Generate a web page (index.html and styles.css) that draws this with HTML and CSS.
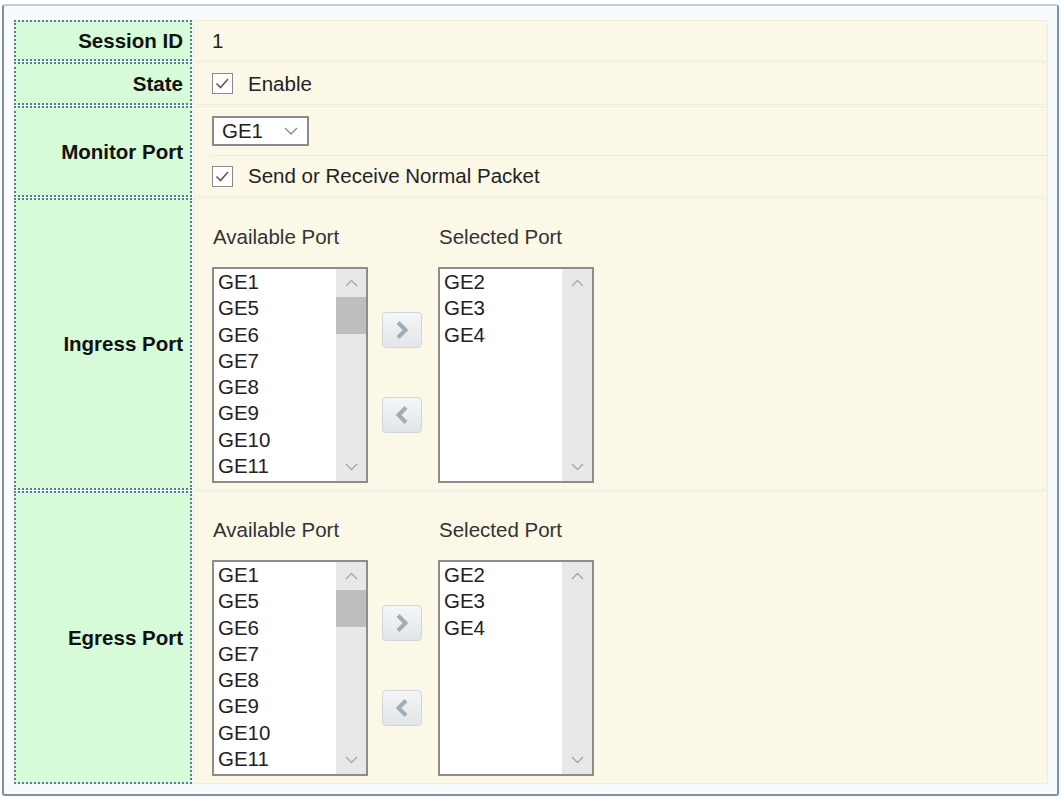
FILE: index.html
```html
<!DOCTYPE html>
<html lang="en">
<head>
  <meta charset="UTF-8">
  <title>Port Mirroring - Session</title>
  <link rel="stylesheet" href="styles.css">
</head>
<body>

  <div class="window">
    <div class="form">

      <div class="row row-session">
        <div class="label">Session ID</div>
        <div class="field">1</div>
      </div>

      <div class="row row-state">
        <div class="label">State</div>
        <div class="field">
          <label class="check-line">
            <span class="check"><svg width="19" height="19" viewBox="0 0 19 19"><polyline points="3.5,9.5 7.5,13.5 15,5" /></svg></span>
            Enable
          </label>
        </div>
      </div>

      <div class="row row-monitor">
        <div class="label">Monitor Port</div>
        <div class="field field-split">
          <div class="sub sub-select">
            <div class="select">
              <span>GE1</span>
              <svg width="14" height="8" viewBox="0 0 14 8"><polyline points="1,1 7,7 13,1" /></svg>
            </div>
          </div>
          <div class="sub sub-check">
            <label class="check-line">
              <span class="check"><svg width="19" height="19" viewBox="0 0 19 19"><polyline points="3.5,9.5 7.5,13.5 15,5" /></svg></span>
              Send or Receive Normal Packet
            </label>
          </div>
        </div>
      </div>

      <div class="row row-ports">
        <div class="label">Ingress Port</div>
        <div class="field field-ports">
          <div class="port-picker">
            <div class="port-title">Available Port</div>
            <div></div>
            <div class="port-title">Selected Port</div>

            <div class="list">
              <div class="list-items">
                <div>GE1</div><div>GE5</div><div>GE6</div><div>GE7</div>
                <div>GE8</div><div>GE9</div><div>GE10</div><div>GE11</div>
              </div>
              <div class="scrollbar">
                <div class="sb-btn"><svg width="13" height="8" viewBox="0 0 13 8"><polyline points="1,7 6.5,1.5 12,7" /></svg></div>
                <div class="sb-thumb"></div>
                <div class="sb-track"></div>
                <div class="sb-btn"><svg width="13" height="8" viewBox="0 0 13 8"><polyline points="1,1 6.5,6.5 12,1" /></svg></div>
              </div>
            </div>

            <div class="move-btns">
              <button class="move"><svg width="16" height="20" viewBox="0 0 16 20"><polyline points="4,2.5 11.5,10 4,17.5" /></svg></button>
              <button class="move"><svg width="16" height="20" viewBox="0 0 16 20"><polyline points="12,2.5 4.5,10 12,17.5" /></svg></button>
            </div>

            <div class="list">
              <div class="list-items">
                <div>GE2</div><div>GE3</div><div>GE4</div>
              </div>
              <div class="scrollbar">
                <div class="sb-btn"><svg width="13" height="8" viewBox="0 0 13 8"><polyline points="1,7 6.5,1.5 12,7" /></svg></div>
                <div class="sb-track"></div>
                <div class="sb-btn"><svg width="13" height="8" viewBox="0 0 13 8"><polyline points="1,1 6.5,6.5 12,1" /></svg></div>
              </div>
            </div>
          </div>
        </div>
      </div>

      <div class="row row-ports row-last">
        <div class="label">Egress Port</div>
        <div class="field field-ports">
          <div class="port-picker">
            <div class="port-title">Available Port</div>
            <div></div>
            <div class="port-title">Selected Port</div>

            <div class="list">
              <div class="list-items">
                <div>GE1</div><div>GE5</div><div>GE6</div><div>GE7</div>
                <div>GE8</div><div>GE9</div><div>GE10</div><div>GE11</div>
              </div>
              <div class="scrollbar">
                <div class="sb-btn"><svg width="13" height="8" viewBox="0 0 13 8"><polyline points="1,7 6.5,1.5 12,7" /></svg></div>
                <div class="sb-thumb"></div>
                <div class="sb-track"></div>
                <div class="sb-btn"><svg width="13" height="8" viewBox="0 0 13 8"><polyline points="1,1 6.5,6.5 12,1" /></svg></div>
              </div>
            </div>

            <div class="move-btns">
              <button class="move"><svg width="16" height="20" viewBox="0 0 16 20"><polyline points="4,2.5 11.5,10 4,17.5" /></svg></button>
              <button class="move"><svg width="16" height="20" viewBox="0 0 16 20"><polyline points="12,2.5 4.5,10 12,17.5" /></svg></button>
            </div>

            <div class="list">
              <div class="list-items">
                <div>GE2</div><div>GE3</div><div>GE4</div>
              </div>
              <div class="scrollbar">
                <div class="sb-btn"><svg width="13" height="8" viewBox="0 0 13 8"><polyline points="1,7 6.5,1.5 12,7" /></svg></div>
                <div class="sb-track"></div>
                <div class="sb-btn"><svg width="13" height="8" viewBox="0 0 13 8"><polyline points="1,1 6.5,6.5 12,1" /></svg></div>
              </div>
            </div>
          </div>
        </div>
      </div>

    </div>
  </div>

</body>
</html>
```

FILE: styles.css
```css
* {
  box-sizing: border-box;
}

body {
  margin: 0;
  background-color: #fff;
  font-family: "Liberation Sans", Arial, sans-serif;
  font-size: 20.5px;
  color: #222;
}

.window {
  width: 1057px;
  height: 792px;
  margin: 4px 0 0 2px;
  padding: 14px 9px 9px 10px;
  border: 2px solid #7891ad;
  border-top-color: #b9cfe3;
  border-radius: 3px;
  background-color: #f8fafb;
}

.form {
  display: flex;
  flex-direction: column;
  gap: 1px;
}

.row {
  display: grid;
  grid-template-columns: 178px 1fr;
  column-gap: 1px;
}

.row-session { height: 41px; }
.row-state { height: 43px; }
.row-monitor { height: 91px; }
.row-ports { height: 292px; }
.row-last { height: 293px; }

.label {
  display: flex;
  align-items: center;
  justify-content: flex-end;
  padding-right: 7px;
  background-color: #d7fad8;
  border: 2px dotted #5a7c9c;
  font-weight: bold;
  color: #111;
}

.field {
  display: flex;
  align-items: center;
  padding-left: 18px;
  background-color: #fcf8e8;
  border: 1px dotted #e4e0cf;
}

/* checkbox + text */
.check-line {
  display: flex;
  align-items: center;
  gap: 15px;
}

.check {
  display: inline-block;
  width: 21px;
  height: 21px;
  border: 1px solid #8b8b8b;
  background-color: #fff;
}

.check svg {
  display: block;
}

.check polyline {
  fill: none;
  stroke: #5a5a5a;
  stroke-width: 1.6;
}

/* monitor port has two lines */
.field-split {
  flex-direction: column;
  align-items: stretch;
}

.sub {
  display: flex;
  align-items: center;
}

.sub-select {
  height: 49px;
  border-bottom: 1px dotted #dedac8;
}

.sub-check {
  flex: 1;
}

.select {
  display: flex;
  align-items: center;
  justify-content: space-between;
  width: 97px;
  height: 30px;
  padding: 0 9px 0 8px;
  border: 2px solid #8a8a8a;
  background-color: #fff;
}

.select polyline {
  fill: none;
  stroke: #8c8c8c;
  stroke-width: 1.3;
}

/* available / selected port pickers */
.field-ports {
  align-items: flex-start;
  padding-top: 26px;
}

.port-picker {
  display: grid;
  grid-template-columns: 156px 70px 156px;
  grid-template-rows: 24px 216px;
  row-gap: 18px;
}

.port-title {
  line-height: 24px;
  padding-left: 1px;
  color: #333;
}

.list {
  display: flex;
  border: 2px solid #8d8d8b;
  background-color: #fff;
  overflow: hidden;
}

.list-items {
  flex: 1;
  padding-left: 4px;
  line-height: 26.3px;
}

.scrollbar {
  display: flex;
  flex-direction: column;
  width: 30px;
  background-color: #e8e8e8;
}

.sb-btn {
  display: flex;
  align-items: center;
  justify-content: center;
  height: 28px;
}

.sb-btn polyline {
  fill: none;
  stroke: #a6a6a6;
  stroke-width: 1.3;
}

.sb-thumb {
  height: 37px;
  background-color: #bebebe;
}

.sb-track {
  flex: 1;
}

.move-btns {
  display: flex;
  flex-direction: column;
  gap: 49px;
  padding: 45px 0 0 14px;
}

.move {
  display: flex;
  align-items: center;
  justify-content: center;
  width: 40px;
  height: 36px;
  padding: 0;
  border: 1px solid #d0d6da;
  border-radius: 4px;
  background: linear-gradient(#f4f6f7, #e2e6e9);
}

.move polyline {
  fill: none;
  stroke: #9fadb6;
  stroke-width: 4;
}
```
